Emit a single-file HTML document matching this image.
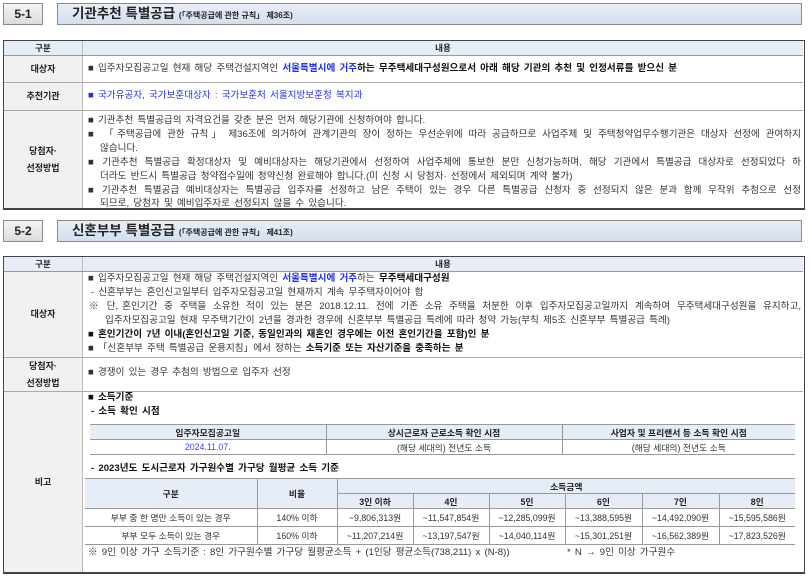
<!DOCTYPE html>
<html><head><meta charset="utf-8"><style>
*{margin:0;padding:0;box-sizing:border-box}
body{width:812px;height:578px;background:#fff;position:relative;overflow:hidden;font-family:"Liberation Sans","Noto Sans CJK KR",sans-serif;font-size:9.6px;color:#333}
.a{position:absolute}
.num{background:linear-gradient(#f4f4f4,#dcdcdc);border:1px solid #8a8a8a;font-weight:bold;font-size:12px;color:#222;text-align:center;line-height:20px}
.ttl{background:linear-gradient(#e8eef7,#d3dfee);border:1px solid #8a8a8a;font-weight:bold;font-size:13.5px;color:#222;line-height:20px;padding-left:14px}
.ttl small{font-size:8px;font-weight:bold}
.tbl{border:1.5px solid #444;border-bottom:2px solid #444}
.hd{background:#e6edf7;border-bottom:1px solid #999;font-weight:bold;font-size:8.5px;color:#222;text-align:center;line-height:14px}
.lc{background:#f1f1f1;border-right:1px solid #bbb;font-weight:bold;color:#222;text-align:center;display:flex;align-items:center;justify-content:center;line-height:17px;font-size:9px}
.ln{position:absolute;white-space:nowrap;line-height:14px;word-spacing:1.5px}
.j{text-align:justify;text-align-last:justify;white-space:normal;word-spacing:0}
.s{display:inline-block;width:4px}
b{color:#111}
.bl{color:#2233dd;font-weight:bold}
.g{border-collapse:collapse;position:absolute;font-size:8.8px;text-align:center;color:#333}
.g td{border:1px solid #999;padding:0;white-space:nowrap}
.g tr.h td{background:#e6edf7;font-weight:bold;color:#222}
</style></head><body>

<div class="a num" style="left:3px;top:3px;width:40px;height:22px">5-1</div>
<div class="a ttl" style="left:57px;top:3px;width:745px;height:22px">기관추천 특별공급 <small>(「주택공급에 관한 규칙」 제36조)</small></div>

<div class="a tbl" style="left:3px;top:40px;width:802px;height:170px">
 <div class="a hd" style="left:0;top:0;width:799px;height:15px"><span class="a" style="left:0;width:79px;border-right:1px solid #bbb">구분</span><span class="a" style="left:79px;width:720px">내용</span></div>
 <div class="a lc" style="left:0;top:15px;width:79px;height:27px;border-bottom:1px solid #aaa">대상자</div>
 <div class="a lc" style="left:0;top:42px;width:79px;height:28px;border-bottom:1px solid #aaa">추천기관</div>
 <div class="a lc" style="left:0;top:70px;width:79px;height:97px">당첨자·<br>선정방법</div>
 <div class="a" style="left:79px;top:41px;width:720px;height:1px;background:#aaa"></div>
 <div class="a" style="left:79px;top:69px;width:720px;height:1px;background:#aaa"></div>
</div>
<div class="ln" style="left:88px;top:62px">■ 입주자모집공고일 현재 해당 주택건설지역인 <span class="bl">서울특별시에 거주</span><b>하는 무주택세대구성원으로서 아래 해당 기관의 추천 및 인정서류를 받으신 분</b></div>
<div class="ln" style="left:88px;top:89px;color:#2233dd">■ 국가유공자, 국가보훈대상자 : 국가보훈처 서울지방보훈청 복지과</div>
<div class="ln" style="left:88px;top:114px">■ 기관추천 특별공급의 자격요건을 갖춘 분은 먼저 해당기관에 신청하여야 합니다.</div>
<div class="ln j" style="left:88px;top:128px;width:713px">■<span class="s"></span>「주택공급에 관한 규칙」<span class="s"></span>제36조에 의거하여 관계기관의 장이 정하는 우선순위에 따라 공급하므로 사업주체 및 주택청약업무수행기관은 대상자 선정에 관여하지</div>
<div class="ln" style="left:100px;top:142px">않습니다.</div>
<div class="ln j" style="left:88px;top:156px;width:713px">■<span class="s"></span>기관추천 특별공급 확정대상자 및 예비대상자는 해당기관에서 선정하여 사업주체에 통보한 분만 신청가능하며, 해당 기관에서 특별공급 대상자로 선정되었다 하</div>
<div class="ln" style="left:100px;top:170px">더라도 반드시 특별공급 청약접수일에 청약신청 완료해야 합니다.(미 신청 시 당첨자· 선정에서 제외되며 계약 불가)</div>
<div class="ln j" style="left:88px;top:184px;width:713px">■<span class="s"></span>기관추천 특별공급 예비대상자는 특별공급 입주자를 선정하고 남은 주택이 있는 경우 다른 특별공급 신청자 중 선정되지 않은 분과 함께 무작위 추첨으로 선정</div>
<div class="ln" style="left:100px;top:197px">되므로, 당첨자 및 예비입주자로 선정되지 않을 수 있습니다.</div>

<div class="a num" style="left:3px;top:220px;width:40px;height:22px">5-2</div>
<div class="a ttl" style="left:57px;top:220px;width:745px;height:22px">신혼부부 특별공급 <small>(「주택공급에 관한 규칙」 제41조)</small></div>

<div class="a tbl" style="left:3px;top:256px;width:802px;height:318px">
 <div class="a hd" style="left:0;top:0;width:799px;height:15px"><span class="a" style="left:0;width:79px;border-right:1px solid #bbb">구분</span><span class="a" style="left:79px;width:720px">내용</span></div>
 <div class="a lc" style="left:0;top:15px;width:79px;height:86px;border-bottom:1px solid #aaa">대상자</div>
 <div class="a lc" style="left:0;top:101px;width:79px;height:34px;border-bottom:1px solid #aaa">당첨자·<br>선정방법</div>
 <div class="a lc" style="left:0;top:135px;width:79px;height:180px">비고</div>
 <div class="a" style="left:79px;top:100px;width:720px;height:1px;background:#aaa"></div>
 <div class="a" style="left:79px;top:134px;width:720px;height:1px;background:#aaa"></div>
</div>
<div class="ln" style="left:88px;top:272px">■ 입주자모집공고일 현재 해당 주택건설지역인 <span class="bl">서울특별시에 거주</span>하는 <b>무주택세대구성원</b></div>
<div class="ln" style="left:91px;top:286px">- 신혼부부는 혼인신고일부터 입주자모집공고일 현재까지 계속 무주택자이어야 함</div>
<div class="ln j" style="left:89px;top:300px;width:712px">※<span class="s"></span>단,<span class="s"></span>혼인기간 중 주택을 소유한 적이 있는 분은 2018.12.11. 전에 기존 소유 주택을 처분한 이후 입주자모집공고일까지 계속하여 무주택세대구성원을 유지하고,</div>
<div class="ln" style="left:105px;top:314px">입주자모집공고일 현재 무주택기간이 2년을 경과한 경우에 신혼부부 특별공급 특례에 따라 청약 가능(부칙 제5조 신혼부부 특별공급 특례)</div>
<div class="ln" style="left:88px;top:328px"><b>■ 혼인기간이 7년 이내(혼인신고일 기준, 동일인과의 재혼인 경우에는 이전 혼인기간을 포함)인 분</b></div>
<div class="ln" style="left:88px;top:342px">■ 「신혼부부 주택 특별공급 운용지침」에서 정하는 <b>소득기준 또는 자산기준을 충족하는 분</b></div>
<div class="ln" style="left:88px;top:366px">■ 경쟁이 있는 경우 추첨의 방법으로 입주자 선정</div>
<div class="ln" style="left:88px;top:391px"><b>■ 소득기준</b></div>
<div class="ln" style="left:91px;top:405px"><b>- 소득 확인 시점</b></div>

<table class="g" style="left:90px;top:424px;width:705px;border-top:1.5px solid #777;border-bottom:1.5px solid #777">
<tr class="h" style="height:15px"><td style="width:236px;border-left:0">입주자모집공고일</td><td style="width:236px">상시근로자 근로소득 확인 시점</td><td style="border-right:0">사업자 및 프리랜서 등 소득 확인 시점</td></tr>
<tr style="height:15px"><td style="color:#3344ee;border-left:0">2024.11.07.</td><td>(해당 세대의) 전년도 소득</td><td style="border-right:0">(해당 세대의) 전년도 소득</td></tr>
</table>
<div class="ln" style="left:91px;top:462px"><b>- 2023년도 도시근로자 가구원수별 가구당 월평균 소득 기준</b></div>

<table class="g" style="left:85px;top:478px;width:710px;border-top:1.5px solid #777;border-bottom:1.5px solid #777">
<tr class="h" style="height:15px"><td rowspan="2" style="width:172px;border-left:0">구분</td><td rowspan="2" style="width:80px">비율</td><td colspan="6" style="border-right:0">소득금액</td></tr>
<tr class="h" style="height:15px"><td style="width:76px">3인 이하</td><td style="width:76px">4인</td><td style="width:76px">5인</td><td style="width:77px">6인</td><td style="width:77px">7인</td><td style="border-right:0">8인</td></tr>
<tr style="height:18px"><td style="border-left:0">부부 중 한 명만 소득이 있는 경우</td><td>140% 이하</td><td>~9,806,313원</td><td>~11,547,854원</td><td>~12,285,099원</td><td>~13,388,595원</td><td>~14,492,090원</td><td style="border-right:0">~15,595,586원</td></tr>
<tr style="height:18px"><td style="border-left:0">부부 모두 소득이 있는 경우</td><td>160% 이하</td><td>~11,207,214원</td><td>~13,197,547원</td><td>~14,040,114원</td><td>~15,301,251원</td><td>~16,562,389원</td><td style="border-right:0">~17,823,526원</td></tr>
</table>
<div class="ln" style="left:88px;top:546px">※ 9인 이상 가구 소득기준 : 8인 가구원수별 가구당 월평균소득 + (1인당 평균소득(738,211) x (N-8))</div>
<div class="ln" style="left:567px;top:546px">* N → 9인 이상 가구원수</div>
</body></html>
